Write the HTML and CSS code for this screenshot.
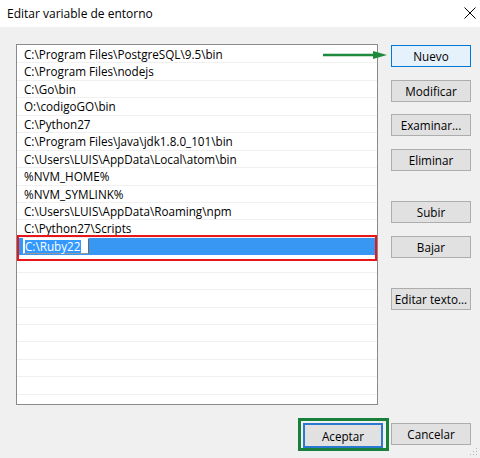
FILE: index.html
```html
<!DOCTYPE html>
<html lang="es">
<head>
<meta charset="utf-8">
<title>Editar variable de entorno</title>
<link rel="stylesheet" href="styles.css">
</head>
<body>
<div class="window">
  <div class="titlebar">
    <span class="title">Editar variable de entorno</span>
    <svg class="close" width="12" height="12" viewBox="0 0 12 12"><path d="M0.5 0.5 L11.5 11.5 M11.5 0.5 L0.5 11.5" stroke="#000" stroke-width="1" fill="none"/></svg>
  </div>
  <div class="content">
    <div class="list">
      <div class="row">C:\Program Files\PostgreSQL\9.5\bin</div>
      <div class="row">C:\Program Files\nodejs</div>
      <div class="row">C:\Go\bin</div>
      <div class="row">O:\codigoGO\bin</div>
      <div class="row">C:\Python27</div>
      <div class="row">C:\Program Files\Java\jdk1.8.0_101\bin</div>
      <div class="row">C:\Users\LUIS\AppData\Local\atom\bin</div>
      <div class="row">%NVM_HOME%</div>
      <div class="row">%NVM_SYMLINK%</div>
      <div class="row">C:\Users\LUIS\AppData\Roaming\npm</div>
      <div class="row">C:\Python27\Scripts</div>
      <div class="row selected"><span class="edit"><span class="sel">C:\Ruby22</span></span></div>
      <div class="row"></div>
      <div class="row"></div>
      <div class="row"></div>
      <div class="row"></div>
      <div class="row"></div>
      <div class="row"></div>
      <div class="row"></div>
      <div class="row"></div>
      <div class="row"></div>
    </div>
    <div class="buttons">
      <button class="btn primary">Nuevo</button>
      <button class="btn">Modificar</button>
      <button class="btn">Examinar...</button>
      <button class="btn">Eliminar</button>
      <button class="btn spaced">Subir</button>
      <button class="btn">Bajar</button>
      <button class="btn spaced">Editar texto...</button>
    </div>
  </div>
  <div class="footer">
    <button class="btn default">Aceptar</button>
    <button class="btn">Cancelar</button>
  </div>

  <div class="mark-red"></div>
  <div class="mark-green"></div>
  <svg class="arrow" width="66" height="10" viewBox="0 0 66 10">
    <path d="M0 5 H52" stroke="#1d8a3e" stroke-width="2.4" fill="none"/>
    <path d="M50 1 L64 5 L50 9 Z" fill="#1d8a3e"/>
  </svg>
  <svg class="grip" width="8" height="8" viewBox="0 0 8 8">
    <rect x="6" y="0" width="1" height="1" fill="#b5b5b5"/>
    <rect x="3" y="3" width="1" height="1" fill="#b5b5b5"/>
    <rect x="6" y="3" width="1" height="1" fill="#b5b5b5"/>
    <rect x="0" y="6" width="1" height="1" fill="#b5b5b5"/>
    <rect x="3" y="6" width="1" height="1" fill="#b5b5b5"/>
    <rect x="6" y="6" width="1" height="1" fill="#b5b5b5"/>
  </svg>
</div>
</body>
</html>
```

FILE: styles.css
```css
* { box-sizing: border-box; }
html, body { margin: 0; padding: 0; }
body {
  font-family: "Open Sans", "Noto Sans", "DejaVu Sans", sans-serif;
  font-size: 11.7px;
  color: #000;
  background: #f0f0f0;
}
.window {
  position: relative;
  width: 480px;
  height: 458px;
  background: #f0f0f0;
  overflow: hidden;
}
.titlebar {
  height: 27px;
  background: #fff;
  display: flex;
  align-items: center;
  justify-content: space-between;
  padding: 0 4px 0 7px;
}
.title {
  font-size: 12px;
  color: #000;
  margin-top: -1px;
}
.close { margin-right: 0; margin-top: -1px; }
.content {
  display: flex;
  align-items: flex-start;
  padding: 17px 0 0 16px;
}
.list {
  width: 362px;
  height: 361px;
  border: 1px solid #8a8a8a;
  background: #fff;
  overflow: hidden;
  padding-top: 1px;
}
.row {
  height: 17.45px;
  line-height: 16.45px;
  border-bottom: 1px solid #f0f0f0;
  padding-left: 7px;
  white-space: nowrap;
}
.row.selected {
  background: #3797f2;
  border-bottom-color: #3797f2;
  padding-left: 6px;
  display: flex;
  align-items: center;
}
.edit {
  display: inline-flex;
  align-items: center;
  width: 66px;
  height: 16px;
  background: #fff;
  border: 1px solid #fff;
  border-right-color: #6a6a6a;
  border-bottom-color: #9a9a9a;
  padding-left: 1px;
}
.sel {
  background: #3399ff;
  color: #fff;
  line-height: 13px;
  padding-right: 1px;
}
.buttons {
  display: flex;
  flex-direction: column;
  gap: 12.5px;
  margin-left: 13px;
  padding-top: 1px;
}
.btn {
  width: 80px;
  height: 22px;
  font-family: inherit;
  font-size: 11.7px;
  color: #000;
  background: #e1e1e1;
  border: 1px solid #adadad;
  padding: 0;
  margin: 0;
  text-align: center;
}
.btn.primary {
  background: #e5f1fb;
  border-color: #0078d7;
}
.btn.spaced { margin-top: 18px; }
.footer {
  display: flex;
  justify-content: flex-end;
  gap: 8px;
  padding: 18px 9px 0 0;
}
.btn.default {
  height: 25px;
  border: 2px solid #2a78d0;
}
.mark-red {
  position: absolute;
  left: 17px;
  top: 235px;
  width: 360px;
  height: 26px;
  border: 2.5px solid #e8151b;
}
.mark-green {
  position: absolute;
  left: 298px;
  top: 418px;
  width: 91px;
  height: 33px;
  border: 3px solid #17803b;
}
.arrow {
  position: absolute;
  left: 323px;
  top: 50px;
}
.grip {
  position: absolute;
  right: 2px;
  bottom: 2px;
}
```
